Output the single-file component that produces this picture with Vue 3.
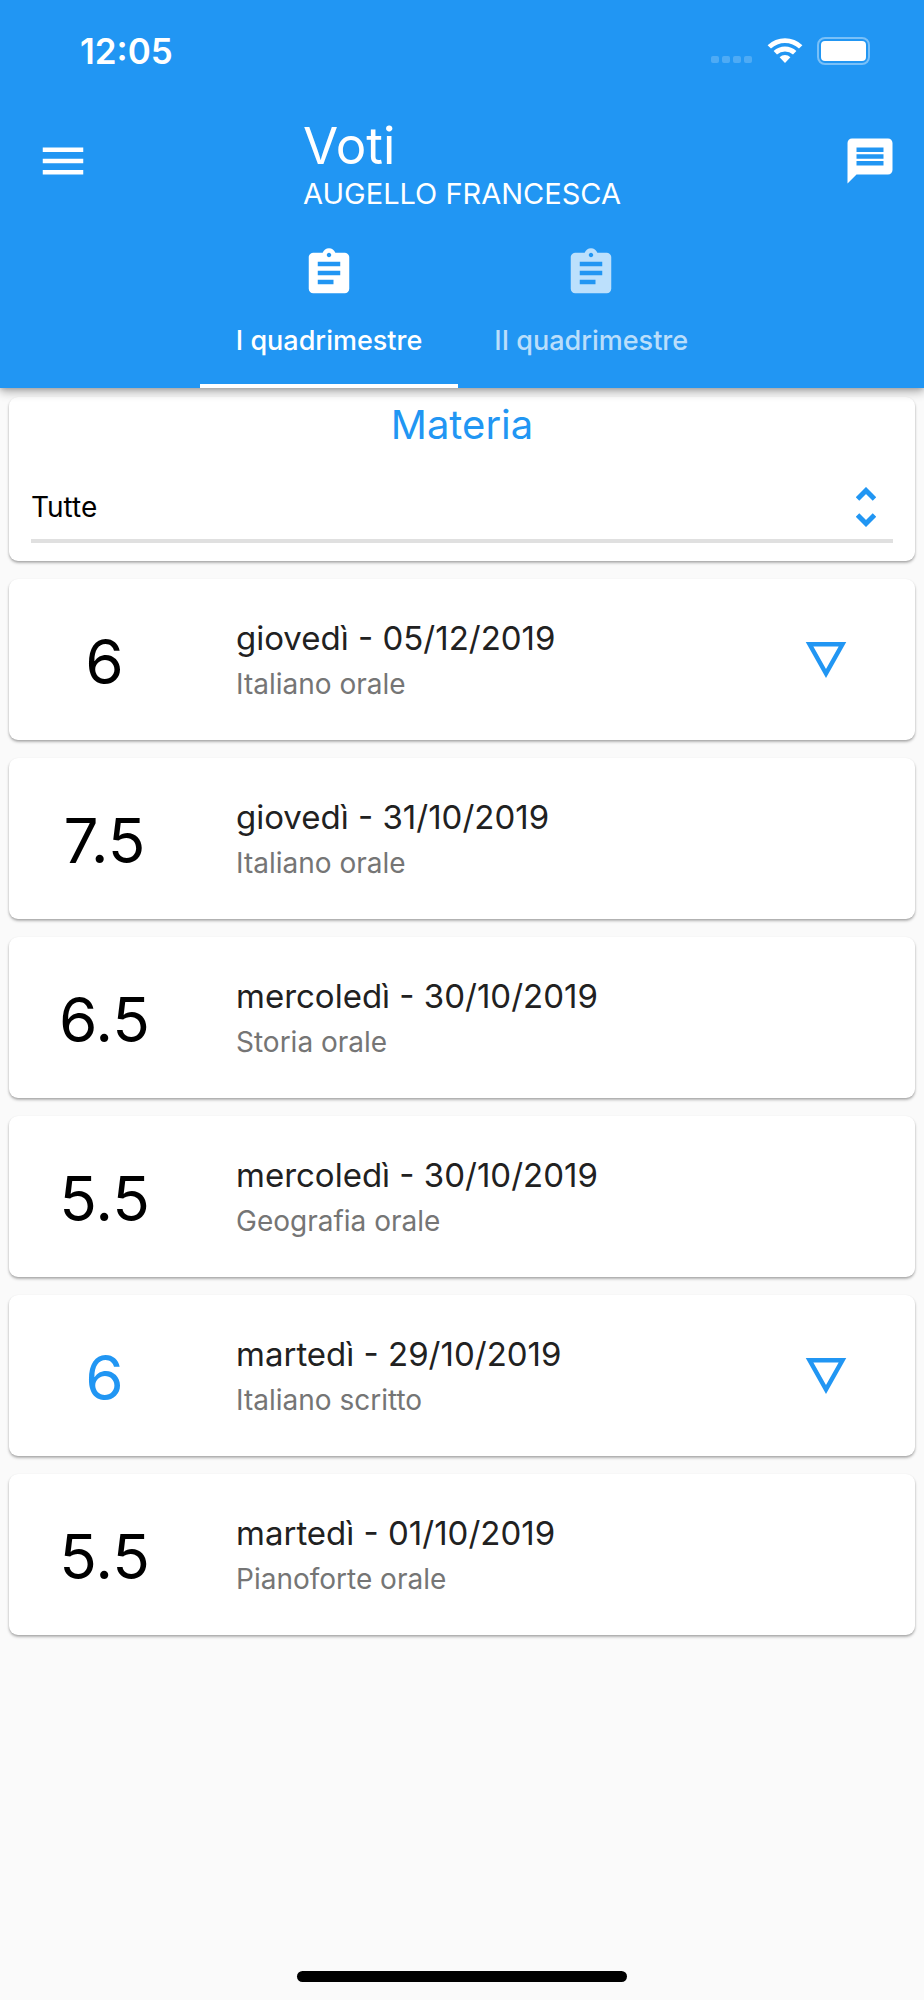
<script setup>
import { ref } from 'vue'

const tabs = ['I quadrimestre', 'II quadrimestre']
const activeTab = ref(0)

const subjects = ['Tutte', 'Italiano', 'Storia', 'Geografia', 'Pianoforte']
const subject = ref('Tutte')

const grades = [
  { value: '6', date: 'giovedì - 05/12/2019', detail: 'Italiano orale', note: true },
  { value: '7.5', date: 'giovedì - 31/10/2019', detail: 'Italiano orale' },
  { value: '6.5', date: 'mercoledì - 30/10/2019', detail: 'Storia orale' },
  { value: '5.5', date: 'mercoledì - 30/10/2019', detail: 'Geografia orale' },
  { value: '6', date: 'martedì - 29/10/2019', detail: 'Italiano scritto', note: true, written: true },
  { value: '5.5', date: 'martedì - 01/10/2019', detail: 'Pianoforte orale' }
]
</script>

<template>
  <div class="screen">
    <header class="header">
      <div class="status">
        <span class="time">12:05</span>
        <div class="indicators">
          <svg class="signal" viewBox="0 0 42 8" aria-hidden="true">
            <rect v-for="n in 4" :key="n" :x="(n - 1) * 11" y="0" width="8" height="7" rx="2" />
          </svg>
          <svg class="wifi" viewBox="0 0 36 27" aria-hidden="true">
            <path d="M0.6 8.2 A25 25 0 0 1 35.4 8.2 L32 11.5 A20.5 20.5 0 0 0 4 11.5 Z" />
            <path d="M6.6 14.1 A16.6 16.6 0 0 1 29.4 14.1 L26 17.5 A12 12 0 0 0 10 17.5 Z" />
            <path d="M12.6 20.2 A8 8 0 0 1 23.4 20.2 L18 26 Z" />
          </svg>
          <svg class="battery" viewBox="0 0 54 28" aria-hidden="true">
            <rect class="shell" x="1" y="1" width="51" height="26" rx="7" />
            <rect x="4" y="4" width="45" height="20" rx="4" />
          </svg>
        </div>
      </div>

      <div class="toolbar">
        <button class="icon-button menu" type="button" aria-label="Menu">
          <svg class="icon" viewBox="0 0 24 24"><path d="M3 18h18v-2H3v2zm0-5h18v-2H3v2zm0-7v2h18V6H3z" /></svg>
        </button>
        <div class="heading">
          <h1>Voti</h1>
          <p>AUGELLO FRANCESCA</p>
        </div>
        <button class="icon-button messages" type="button" aria-label="Messaggi">
          <svg class="icon" viewBox="0 0 24 24">
            <path d="M20 2H4c-1.100 0-1.990.9-1.990 2L2 22l4-4h14c1.100 0 2-.9 2-2V4c0-1.100-.9-2-2-2zm-2 12H6v-2h12v2zm0-3H6V9h12v2zm0-3H6V6h12v2z" />
          </svg>
        </button>
      </div>

      <div class="tabs" role="tablist">
        <button
          v-for="(tab, i) in tabs"
          :key="tab"
          class="tab"
          :class="{ active: i === activeTab }"
          type="button"
          role="tab"
          :aria-selected="i === activeTab"
          @click="activeTab = i"
        >
          <svg class="icon" viewBox="0 0 24 24" aria-hidden="true">
            <path d="M19 3h-4.180C14.400 1.840 13.300 1 12 1c-1.300 0-2.400.84-2.820 2H5c-1.100 0-2 .9-2 2v14c0 1.100.9 2 2 2h14c1.100 0 2-.9 2-2V5c0-1.100-.9-2-2-2zm-7 0c.55 0 1 .45 1 1s-.45 1-1 1-1-.45-1-1 .45-1 1-1zm2 14H7v-2h7v2zm3-4H7v-2h10v2zm0-4H7V7h10v2z" />
          </svg>
          <span>{{ tab }}</span>
        </button>
      </div>
    </header>

    <main class="content">
      <section class="card filter">
        <label for="subject">Materia</label>
        <div class="field">
          <select id="subject" v-model="subject">
            <option v-for="s in subjects" :key="s">{{ s }}</option>
          </select>
          <svg class="chevrons" viewBox="0 0 20 40" aria-hidden="true">
            <path d="M1.500 12 L10 3.500 L18.500 12 M1.500 28 L10 36.500 L18.500 28" />
          </svg>
        </div>
      </section>

      <article v-for="(g, i) in grades" :key="i" class="card grade">
        <span class="value" :class="{ written: g.written }">{{ g.value }}</span>
        <div class="info">
          <h2>{{ g.date }}</h2>
          <p>{{ g.detail }}</p>
        </div>
        <button v-if="g.note" class="icon-button note" type="button" aria-label="Dettagli">
          <svg class="icon" viewBox="0 0 24 24"><path d="M3 4l9 16 9-16H3zm3.380 2h11.250L12 16 6.380 6z" /></svg>
        </button>
      </article>
    </main>

    <div class="home-indicator"></div>
  </div>
</template>

<style>
body {
  background: #fafafa;
}
</style>

<style scoped>
* {
  box-sizing: border-box;
}

h1,
h2,
p {
  margin: 0;
  font-weight: 400;
}

.screen {
  display: flex;
  flex-direction: column;
  min-height: 100vh;
  background: #fafafa;
  color: #000;
  font-family: Inter, Roboto, sans-serif;
}

.header {
  position: relative;
  z-index: 1;
  background: #2196f3;
  color: #fff;
  box-shadow: 0 4px 9px rgba(0, 0, 0, 0.3), 0 1px 4px rgba(0, 0, 0, 0.14);
}

.status {
  display: flex;
  justify-content: space-between;
  align-items: center;
  height: 98px;
  padding: 3px 53px 0 80px;
}

.time {
  font-size: 35px;
  line-height: 40px;
  font-weight: 600;
}

.indicators {
  display: flex;
  align-items: center;
  gap: 14px;
}

.indicators svg {
  fill: #fff;
}

.signal {
  width: 42px;
  height: 8px;
  margin-top: 18px;
  opacity: 0.2;
}

.wifi {
  width: 36px;
  height: 27px;
}

.battery {
  width: 54px;
  height: 28px;
}

.battery .shell {
  fill: none;
  stroke: #fff;
  stroke-width: 2;
  opacity: 0.4;
}

.toolbar {
  display: grid;
  grid-template-columns: 1fr auto 1fr;
  align-items: center;
  height: 126px;
  padding: 0 27px;
}

.icon-button {
  display: flex;
  padding: 0;
  border: 0;
  background: none;
  color: inherit;
}

.menu {
  padding-left: 9px;
}

.messages {
  justify-self: end;
}

.icon {
  width: 54px;
  height: 54px;
  fill: currentColor;
}

.heading {
  padding-top: 8px;
}

.heading h1 {
  font-size: 51px;
  line-height: 57px;
}

.heading p {
  font-size: 29px;
  line-height: 40px;
}

.tabs {
  display: flex;
  justify-content: center;
}

.tab {
  display: flex;
  flex-direction: column;
  align-items: center;
  gap: 23px;
  height: 164px;
  padding: 22px 36px 0;
  border: 0;
  border-bottom: 4px solid transparent;
  background: none;
  color: rgba(255, 255, 255, 0.7);
  font-family: inherit;
  font-size: 27px;
  line-height: 36px;
  font-weight: 500;
}

.tab.active {
  border-bottom-color: #fff;
  color: #fff;
}

.content {
  display: flex;
  flex-direction: column;
  flex: 1;
  gap: 18px;
  padding: 9px;
}

.card {
  border-radius: 9px;
  background: #fff;
  box-shadow: 0 2px 3px rgba(0, 0, 0, 0.26), 0 1px 2px rgba(0, 0, 0, 0.12);
}

.filter {
  display: flex;
  flex-direction: column;
  height: 164px;
  padding: 0 22px;
}

.filter label {
  color: #2196f3;
  font-size: 40px;
  line-height: 56px;
  text-align: center;
}

.field {
  display: grid;
  align-items: center;
  height: 90px;
  padding-top: 22px;
  border-bottom: 4px solid #e0e0e0;
}

.field select {
  grid-area: 1 / 1;
  width: 100%;
  height: 60px;
  padding: 0;
  border: 0;
  background: none;
  appearance: none;
  color: #000;
  font-family: inherit;
  font-size: 28px;
}

.chevrons {
  grid-area: 1 / 1;
  justify-self: end;
  width: 20px;
  height: 40px;
  margin-right: 17px;
  fill: none;
  stroke: #2196f3;
  stroke-width: 5;
  pointer-events: none;
}

.grade {
  display: flex;
  align-items: center;
  height: 161px;
  padding-right: 62px;
}

.value {
  width: 191px;
  padding-top: 4px;
  font-size: 62px;
  line-height: 72px;
  text-align: center;
}

.value.written {
  color: #2196f3;
}

.info {
  flex: 1;
  padding-left: 36px;
}

.info h2 {
  color: #212121;
  font-size: 33px;
  line-height: 48px;
}

.info p {
  color: #757575;
  font-size: 28px;
  line-height: 44px;
}

.note {
  color: #2196f3;
}

.home-indicator {
  align-self: center;
  width: 330px;
  height: 11px;
  margin-bottom: 18px;
  border-radius: 6px;
  background: #000;
}
</style>
